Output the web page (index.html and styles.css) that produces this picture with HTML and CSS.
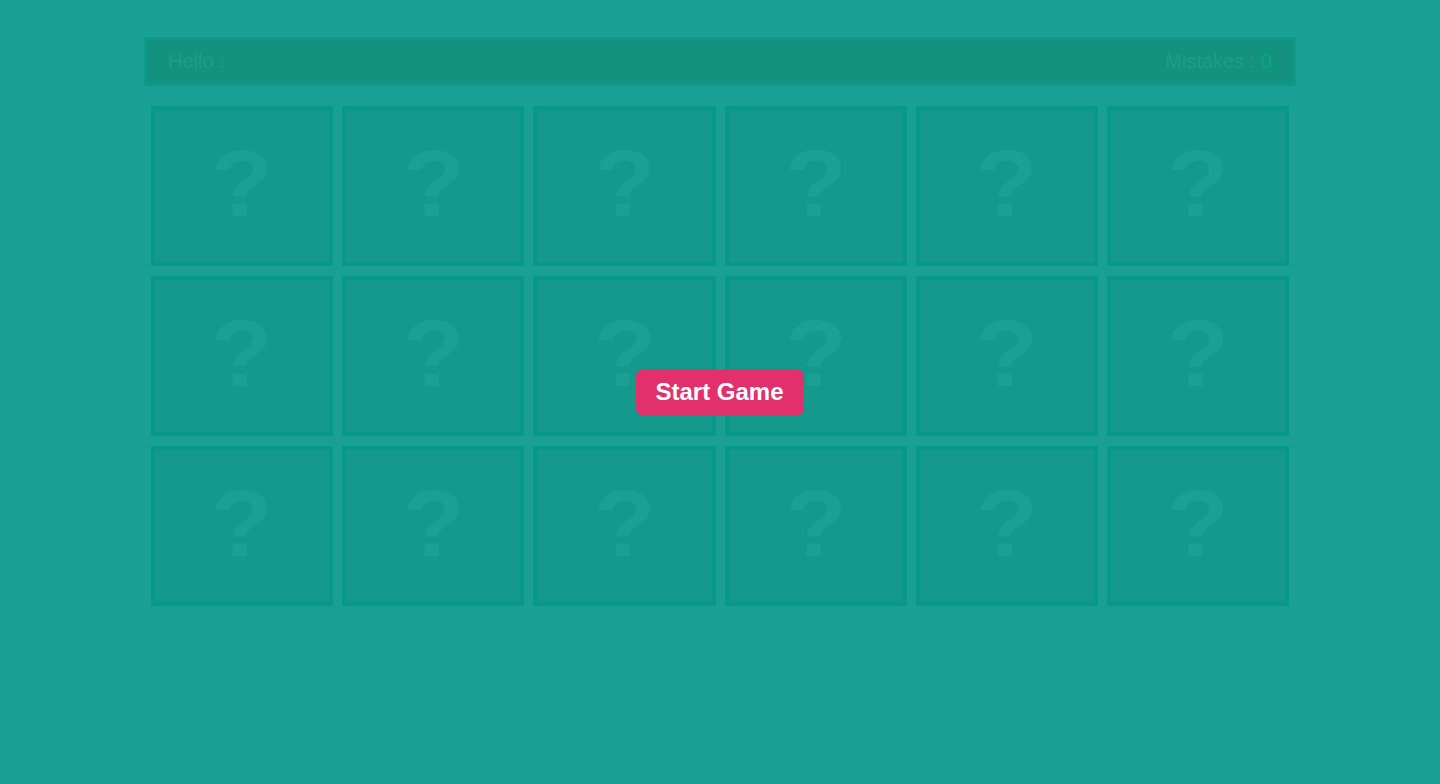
FILE: index.html
```html
<!DOCTYPE html>
<html>
<head>
<meta charset="utf-8">
<title>Memory Game</title>
<link rel="stylesheet" href="styles.css">
</head>
<body>
<div class="container">
  <div class="info">
    <span class="hello">Hello :</span>
    <span class="mistakes">Mistakes : <span class="count">0</span></span>
  </div>
  <div class="board">
    <div class="card"><span>?</span></div>
    <div class="card"><span>?</span></div>
    <div class="card"><span>?</span></div>
    <div class="card"><span>?</span></div>
    <div class="card"><span>?</span></div>
    <div class="card"><span>?</span></div>
    <div class="card"><span>?</span></div>
    <div class="card"><span>?</span></div>
    <div class="card"><span>?</span></div>
    <div class="card"><span>?</span></div>
    <div class="card"><span>?</span></div>
    <div class="card"><span>?</span></div>
    <div class="card"><span>?</span></div>
    <div class="card"><span>?</span></div>
    <div class="card"><span>?</span></div>
    <div class="card"><span>?</span></div>
    <div class="card"><span>?</span></div>
    <div class="card"><span>?</span></div>
  </div>
</div>
<div class="overlay">
  <button class="start">Start Game</button>
</div>
</body>
</html>
```

FILE: styles.css
```css
html, body {
  margin: 0;
  padding: 0;
  background: #1a9f94;
  font-family: "Liberation Sans", Arial, sans-serif;
}

.container {
  width: 1152px;
  margin: 37px auto 0;
}

.info {
  box-sizing: border-box;
  height: 49px;
  border: 3px solid #0e9a88;
  background: #13937f;
  display: flex;
  justify-content: space-between;
  align-items: center;
  padding: 0 21px;
  font-size: 20px;
  color: #1a9f8b;
}

.mistakes .count {
  color: #07a48c;
}

.board {
  margin-top: 20px;
  padding: 0 7px;
  display: grid;
  grid-template-columns: repeat(6, 1fr);
  grid-auto-rows: 160px;
  column-gap: 9px;
  row-gap: 10px;
}

.card {
  box-sizing: border-box;
  border: 4px solid #069986;
  background: #15998d;
  display: flex;
  align-items: center;
  justify-content: center;
}

.card span {
  font-size: 94px;
  font-weight: bold;
  color: #1aa194;
  line-height: 1;
  margin-top: -4px;
  transform: scaleX(1.08);
}

.overlay {
  position: fixed;
  inset: 0;
  display: flex;
  align-items: center;
  justify-content: center;
}

.start {
  font-family: "Liberation Sans", Arial, sans-serif;
  font-size: 24px;
  font-weight: bold;
  color: #fff;
  background: #e2306c;
  border: none;
  border-radius: 8px;
  width: 168px;
  height: 47px;
  padding: 0;
  margin-left: -1px;
  cursor: pointer;
}
```
